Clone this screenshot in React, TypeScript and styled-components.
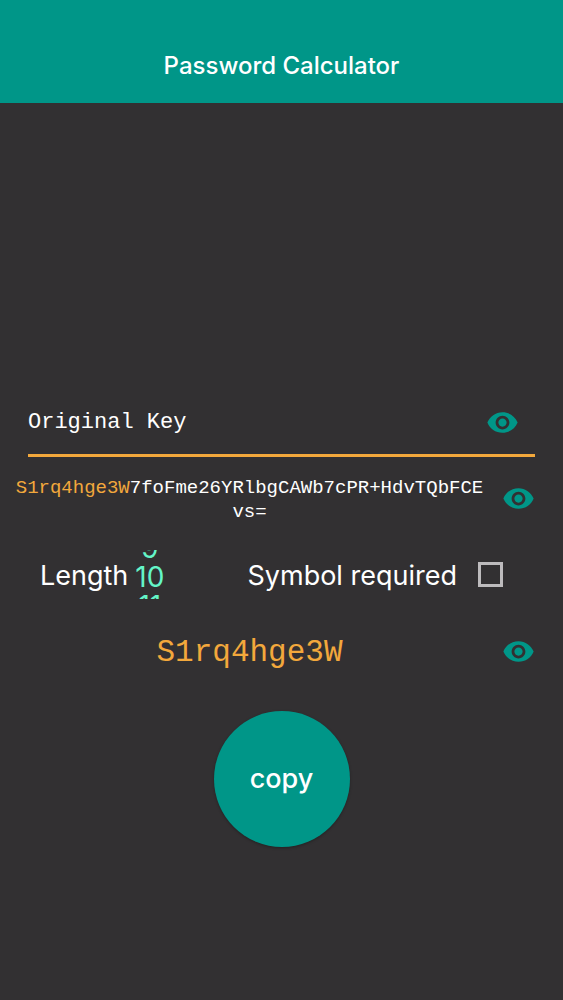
import React, { useState } from "react";
import styled, { createGlobalStyle } from "styled-components";

const colors = {
  teal: "#009688",
  ground: "#323032",
  amber: "#f3a83c",
  mint: "#64f5c8",
  white: "#ffffff",
};

const sans = `Inter, "Liberation Sans", sans-serif`;
const mono = `"Liberation Mono", monospace`;

const GlobalStyle = createGlobalStyle`
  *, *::before, *::after { box-sizing: border-box; }
  body {
    margin: 0;
    background: ${colors.ground};
    color: ${colors.white};
    font-family: ${sans};
  }
`;

const Screen = styled.div`
  display: flex;
  flex-direction: column;
  min-height: 100vh;
`;

const Header = styled.header`
  display: flex;
  justify-content: center;
  padding: 50px 16px 21px;
  background: ${colors.teal};
`;

const Title = styled.h1`
  margin: 0;
  font-size: 24px;
  line-height: 32px;
  font-weight: 500;
`;

const Main = styled.main`
  display: flex;
  flex-direction: column;
  padding-top: 288px;
`;

const KeyField = styled.div`
  display: flex;
  align-items: center;
  margin: 0 28px;
  padding: 0 16px 0 0;
  height: 66px;
  border-bottom: 3px solid ${colors.amber};
`;

const KeyInput = styled.input`
  flex: 1;
  min-width: 0;
  padding: 0;
  border: 0;
  outline: 0;
  background: transparent;
  color: ${colors.white};
  font: 22px/32px ${mono};
  &::placeholder { color: ${colors.white}; opacity: 1; }
`;

const IconButton = styled.button`
  display: flex;
  flex: none;
  padding: 0;
  border: 0;
  background: transparent;
  color: ${colors.teal};
  cursor: pointer;
`;

const OutputRow = styled.div<{ $height: number }>`
  display: flex;
  align-items: center;
  gap: 3px;
  min-height: ${(p) => p.$height}px;
  padding-right: 28px;
`;

const Hash = styled.p`
  flex: 1;
  min-width: 0;
  margin: 0;
  padding: 4px 12px 0;
  text-align: center;
  overflow-wrap: anywhere;
  font: 19px/24px ${mono};
`;

const Picked = styled.span`
  color: ${colors.amber};
`;

const Password = styled.output`
  flex: 1;
  padding-top: 4px;
  text-align: center;
  color: ${colors.amber};
  font: 31px/48px ${mono};
`;

const Options = styled.div`
  display: flex;
  align-items: center;
  justify-content: space-between;
  padding: 0 60px 0 40px;
  margin-top: 11px;
`;

const Option = styled.div<{ $gap: number }>`
  display: flex;
  align-items: center;
  gap: ${(p) => p.$gap}px;
  font-size: 27px;
  line-height: 32px;
`;

const OptionLabel = styled.label`
  padding-top: 2px;
`;

const Wheel = styled.ul`
  display: flex;
  flex-direction: column;
  justify-content: center;
  align-items: center;
  height: 49px;
  margin: 0;
  padding: 5px 0 0;
  overflow: hidden;
  list-style: none;
  color: ${colors.mint};
  font-size: 28px;
`;

const WheelItem = styled.li`
  flex: none;
  line-height: 29px;
`;

const Checkbox = styled.input`
  appearance: none;
  width: 25px;
  height: 25px;
  margin: 0;
  border: 3px solid #bdbbbd;
  &:checked { background: ${colors.teal}; }
`;

const CopyButton = styled.button`
  align-self: center;
  width: 136px;
  height: 136px;
  margin-top: 8px;
  padding: 0;
  border: 0;
  border-radius: 50%;
  background: ${colors.teal};
  color: ${colors.white};
  box-shadow: 0 1px 3px rgba(0, 0, 0, 0.3);
  font: 500 27px/32px ${sans};
  cursor: pointer;
`;

function EyeButton({ label }: { label: string }) {
  return (
    <IconButton type="button" aria-label={label}>
      <svg width="33" height="33" viewBox="0 0 24 24" fill="currentColor" aria-hidden="true">
        <path d="M12 4.5C7 4.5 2.73 7.61 1 12c1.73 4.39 6 7.5 11 7.5s9.27-3.11 11-7.5c-1.73-4.39-6-7.5-11-7.5zM12 17c-2.76 0-5-2.24-5-5s2.24-5 5-5 5 2.24 5 5-2.24 5-5 5zm0-8c-1.66 0-3 1.34-3 3s1.34 3 3 3 3-1.34 3-3-1.34-3-3-3z" />
      </svg>
    </IconButton>
  );
}

const hash = "S1rq4hge3W7foFme26YRlbgCAWb7cPR+HdvTQbFCEvs=";
const length = 10;

export default function App() {
  const [symbol, setSymbol] = useState(false);
  const password = hash.slice(0, length);

  return (
    <Screen>
      <GlobalStyle />
      <Header>
        <Title>Password Calculator</Title>
      </Header>
      <Main>
        <KeyField>
          <KeyInput type="text" placeholder="Original Key" aria-label="Original Key" />
          <EyeButton label="Show original key" />
        </KeyField>
        <OutputRow $height={82}>
          <Hash>
            <Picked>{password}</Picked>
            {hash.slice(length)}
          </Hash>
          <EyeButton label="Show hash" />
        </OutputRow>
        <Options>
          <Option $gap={7}>
            <OptionLabel as="span" id="length-label">Length</OptionLabel>
            <Wheel role="listbox" aria-labelledby="length-label">
              {[length - 1, length, length + 1].map((n) => (
                <WheelItem key={n} role="option" aria-selected={n === length}>
                  {n}
                </WheelItem>
              ))}
            </Wheel>
          </Option>
          <Option $gap={21}>
            <OptionLabel htmlFor="symbol">Symbol required</OptionLabel>
            <Checkbox
              id="symbol"
              type="checkbox"
              checked={symbol}
              onChange={(e) => setSymbol(e.target.checked)}
            />
          </Option>
        </Options>
        <OutputRow $height={104}>
          <Password>{password}</Password>
          <EyeButton label="Show password" />
        </OutputRow>
        <CopyButton type="button">copy</CopyButton>
      </Main>
    </Screen>
  );
}
